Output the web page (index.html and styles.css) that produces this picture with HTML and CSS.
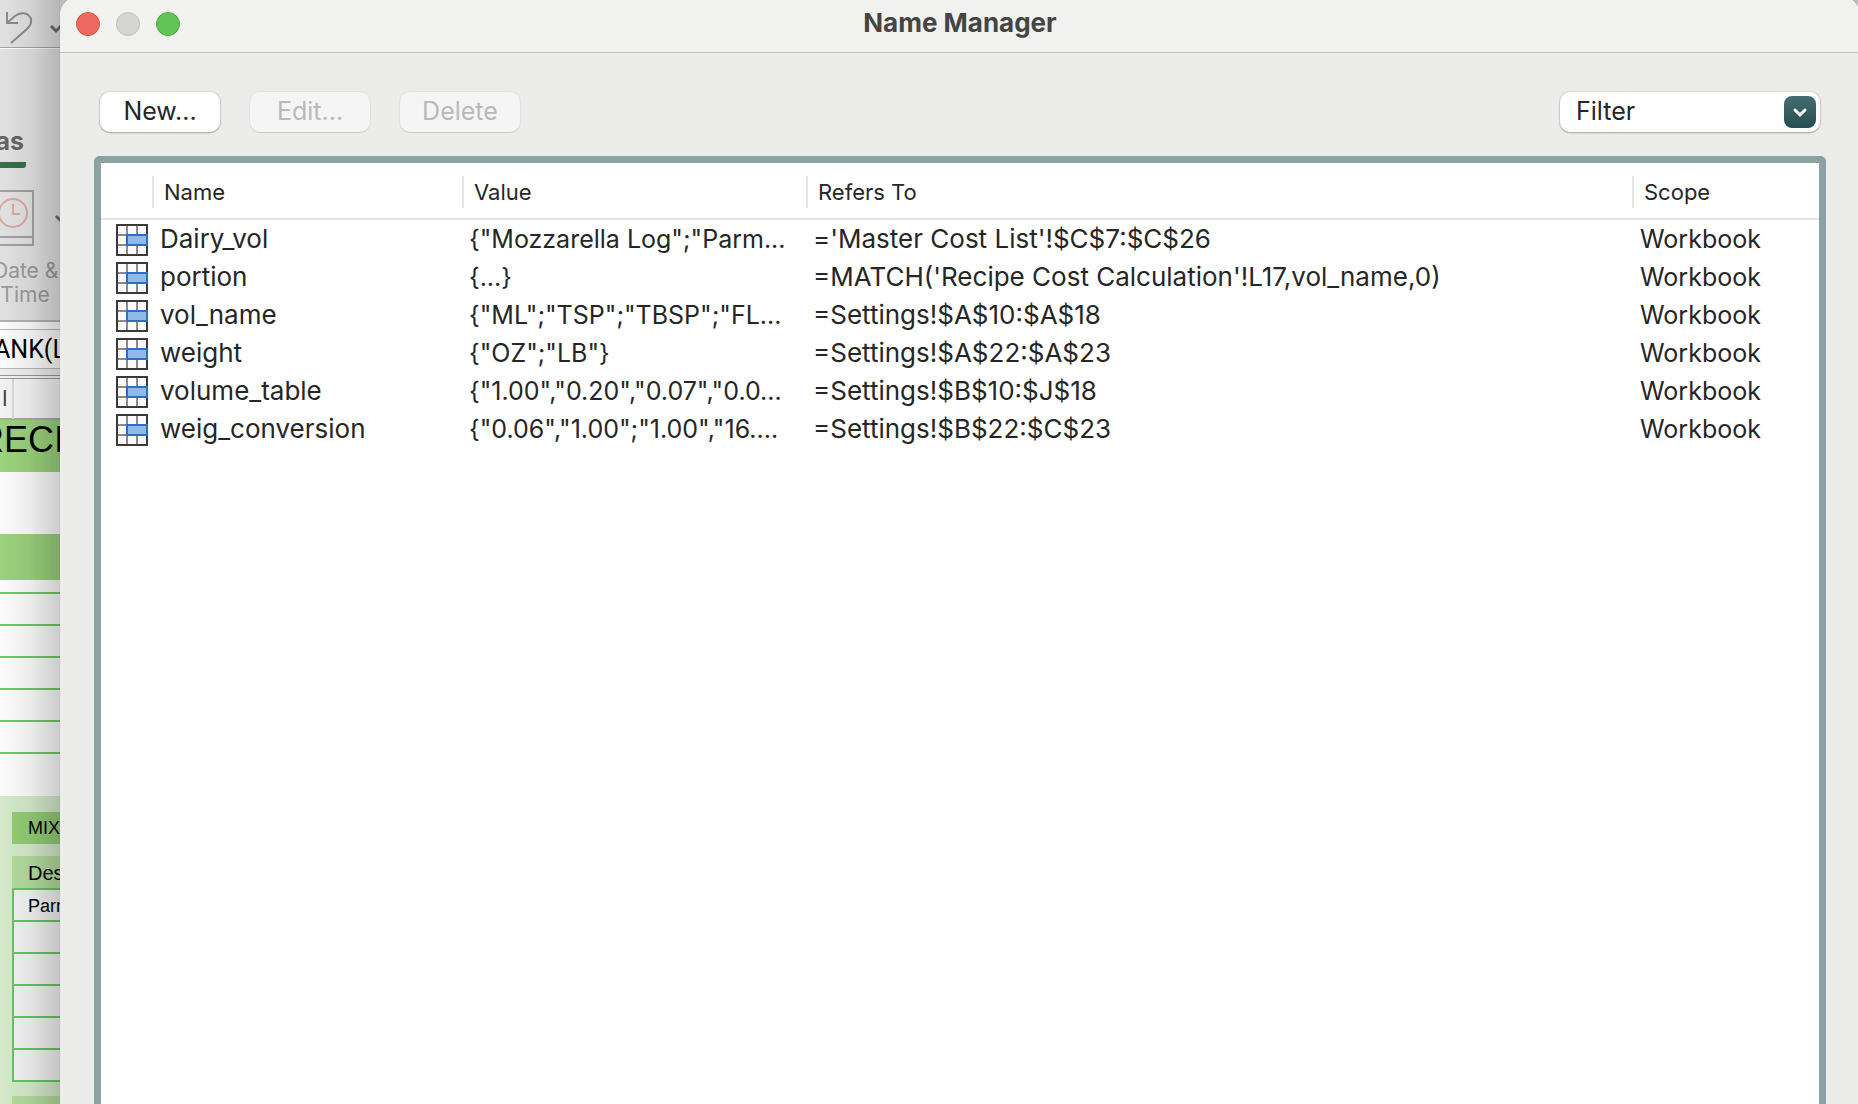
FILE: index.html
```html
<!DOCTYPE html>
<html lang="en">
<head>
<meta charset="utf-8">
<meta name="viewport" content="width=device-width, initial-scale=1">
<title>Name Manager</title>
<link rel="stylesheet" href="styles.css">
</head>
<body>
<svg class="defs" aria-hidden="true">
  <symbol id="range" viewBox="0 0 32 32">
    <path d="M1 1h30v30H1z" fill="#fafafa"/>
    <path d="M11 1v30M21 1v30M1 11h30M1 21h30" stroke="#8d8987" stroke-width="2"/>
    <path d="M1 1h30v30H1z" fill="none" stroke="#3b3a39" stroke-width="2"/>
    <path d="M11 11h20v10H11z" fill="#90bbe8" stroke="#2f6dc0" stroke-width="2"/>
  </symbol>
</svg>

<aside class="sheet">
  <div class="sheet-title">
    <svg class="undo" viewBox="0 0 60 47" fill="none">
      <path d="M7 12v11h11M7 23l8-7c6-5 14-3 16 3 1 4-1 7-4 10L11 43" stroke="#8c8c8c" stroke-width="2"/>
      <path d="M51 26l5 5 5-5" stroke="#6d6d6d" stroke-width="3"/>
    </svg>
  </div>
  <div class="ribbon">
    <div class="tab">as</div>
    <svg class="date-icon" viewBox="0 0 60 58" fill="none">
      <path d="M0 1h33v54H0M0 47h33" stroke="#a3a3a3" stroke-width="2"/>
      <circle cx="13" cy="23" r="14" stroke="#dda9a5" stroke-width="2"/>
      <path d="M13 14v10h7" stroke="#dda9a5" stroke-width="2"/>
      <path d="M56 26l5 5" stroke="#6d6d6d" stroke-width="3"/>
    </svg>
    <div class="date-label">Date &amp;<br>Time</div>
  </div>
  <div class="formula">ANK(L</div>
  <div class="columns"><span>I</span></div>
  <div class="banner">RECI</div>
  <div class="blank"></div>
  <div class="band"></div>
  <div class="lines"><i></i><i></i><i></i><i></i><i></i><i></i></div>
  <div class="mix">
    <div class="mix-title">MIX</div>
    <div class="mix-head">Des</div>
    <div class="mix-rows"><i>Parm</i><i></i><i></i><i></i><i></i><i></i></div>
    <div class="mix-next"></div>
  </div>
</aside>

<main class="dialog">
  <header class="titlebar">
    <div class="lights">
      <button class="light close" aria-label="Close"></button>
      <button class="light minimize" aria-label="Minimize" disabled></button>
      <button class="light expand" aria-label="Zoom"></button>
    </div>
    <h1>Name Manager</h1>
  </header>
  <div class="toolbar">
    <button class="push">New...</button>
    <button class="push" disabled>Edit...</button>
    <button class="push" disabled>Delete</button>
    <div class="filter">
      <select aria-label="Filter"><option>Filter</option></select>
      <svg class="filter-arrow" viewBox="0 0 32 32" fill="none" aria-hidden="true">
        <path d="M11 14l5 5 5-5" stroke="#fff" stroke-width="3" stroke-linecap="round" stroke-linejoin="round"/>
      </svg>
    </div>
  </div>
  <section class="panel">
    <table>
      <colgroup><col class="c-icon"><col class="c-name"><col class="c-value"><col><col class="c-scope"></colgroup>
      <thead>
        <tr><td></td><th><span>Name</span></th><th><span>Value</span></th><th><span>Refers To</span></th><th><span>Scope</span></th></tr>
      </thead>
      <tbody>
        <tr><td><svg class="range"><use href="#range"/></svg></td><td class="name">Dairy_vol</td><td>{"Mozzarella Log";"Parm...</td><td class="refers">='Master Cost List'!$C$7:$C$26</td><td class="scope">Workbook</td></tr>
        <tr><td><svg class="range"><use href="#range"/></svg></td><td class="name">portion</td><td>{...}</td><td class="refers">=MATCH('Recipe Cost Calculation'!L17,vol_name,0)</td><td class="scope">Workbook</td></tr>
        <tr><td><svg class="range"><use href="#range"/></svg></td><td class="name">vol_name</td><td>{"ML";"TSP";"TBSP";"FL...</td><td class="refers">=Settings!$A$10:$A$18</td><td class="scope">Workbook</td></tr>
        <tr><td><svg class="range"><use href="#range"/></svg></td><td class="name">weight</td><td>{"OZ";"LB"}</td><td class="refers">=Settings!$A$22:$A$23</td><td class="scope">Workbook</td></tr>
        <tr><td><svg class="range"><use href="#range"/></svg></td><td class="name">volume_table</td><td>{"1.00","0.20","0.07","0.0...</td><td class="refers">=Settings!$B$10:$J$18</td><td class="scope">Workbook</td></tr>
        <tr><td><svg class="range"><use href="#range"/></svg></td><td class="name">weig_conversion</td><td>{"0.06","1.00";"1.00","16....</td><td class="refers">=Settings!$B$22:$C$23</td><td class="scope">Workbook</td></tr>
      </tbody>
    </table>
  </section>
</main>
</body>
</html>
```
FILE: styles.css
```css
* { box-sizing: border-box; }

body {
  margin: 0;
  height: 100vh;
  display: flex;
  overflow: hidden;
  background: #bdbdbd;
  color: #262626;
  font-family: Inter, "Liberation Sans", sans-serif;
  font-size: 25px;
}

button, select { font: inherit; color: inherit; }
.defs { position: absolute; width: 0; height: 0; }

/* Workbook behind the dialog */
.sheet {
  position: relative;
  flex: 0 0 60px;
  display: flex;
  flex-direction: column;
  overflow: hidden;
  background: #fff;
  white-space: nowrap;
  color: #000;
  font-family: "Liberation Sans", Arial, sans-serif;
}
.sheet > * { flex-shrink: 0; }
.sheet i { display: block; font-style: normal; }
.sheet::after {
  content: "";
  position: absolute;
  inset: 0;
  border-right: 1px solid rgba(0, 0, 0, .22);
  background: linear-gradient(90deg, rgba(0, 0, 0, .01), rgba(0, 0, 0, .07) 50%, rgba(0, 0, 0, .2));
}
.sheet-title { height: 48px; background: #e4e4e4; border-bottom: 1px solid #a5a5a5; }
.undo { display: block; width: 60px; height: 47px; }
.ribbon {
  height: 274px;
  border-top: 1px solid #fff;
  border-bottom: 2px solid #b4b4b4;
  background: #e4e4e4;
  font-family: Inter, sans-serif;
}
.tab {
  width: 26px;
  height: 119px;
  padding-top: 76px;
  padding-right: 2px;
  display: flex;
  justify-content: flex-end;
  border-bottom: 6px solid #33734a;
  border-bottom-right-radius: 3px;
  color: #666;
  font-size: 25px;
  line-height: 32px;
  font-weight: 700;
}
.date-icon { display: block; width: 60px; height: 58px; margin-top: 22px; }
.date-label {
  width: 64px;
  margin: 11px 0 0 -7px;
  text-align: center;
  color: #9b9b9b;
  font-size: 21px;
  line-height: 24px;
}
.formula {
  height: 46px;
  margin-top: 7px;
  padding-top: 2px;
  border-top: 1px solid #bbb;
  background: linear-gradient(#fff 38px, #bbb 38px, #bbb 39px, #f1f1f1 39px);
  font-family: Roboto, sans-serif;
  font-size: 25px;
  line-height: 36px;
  text-indent: -6px;
}
.columns {
  height: 45px;
  border-top: 4px double #999;
  border-bottom: 2px solid #aaa;
  background: #f7f7f7;
  font-family: Inter, sans-serif;
  font-size: 21px;
  line-height: 40px;
}
.columns span {
  display: block;
  width: 14px;
  padding-left: 2px;
  border-right: 2px solid #ddd;
  color: #444;
}
.banner {
  height: 52px;
  background: #9dd47d;
  font-size: 36px;
  line-height: 40px;
  text-indent: -22px;
}
.blank { height: 62px; }
.band { height: 46px; background: #9dd47d; }
.lines { height: 216px; padding-top: 12px; }
.lines i { height: 32px; border-top: 2px solid #6fcd66; }
.mix {
  flex: 1 0 0;
  padding: 16px 0 0 12px;
  background: #d8edcd;
  font-size: 18px;
  line-height: 32px;
}
.mix-title { height: 32px; padding-left: 16px; background: #95cf77; }
.mix-head { height: 32px; margin-top: 12px; padding-left: 16px; background: #b7dfa1; font-size: 20px; line-height: 34px; }
.mix-rows { border: solid #68c862; border-width: 0 0 2px 2px; background: #f6f6f6; }
.mix-rows i { height: 32px; padding-left: 14px; border-top: 2px solid #68c862; }
.mix-next { height: 32px; margin-top: 14px; background: #b7dfa1; }

/* Dialog */
.dialog {
  flex: 1;
  display: flex;
  flex-direction: column;
  margin: -4px -2px 0 0;
  border-radius: 20px 20px 0 0;
  background: #ececea;
}
.titlebar {
  display: grid;
  grid-template-columns: 1fr auto 1fr;
  align-items: center;
  height: 57px;
  padding: 0 16px;
  border-bottom: 1px solid #c4c4c2;
  border-radius: 20px 20px 0 0;
  background: #f1f1ef;
}
.lights { display: flex; gap: 16px; }
.light { width: 24px; height: 24px; padding: 0; border: 1px solid #d35449; border-radius: 50%; background: #ec6a5f; }
.minimize { border-color: #bdbdbb; background: #d5d5d3; }
.expand { border-color: #50a941; background: #61c454; }
h1 { margin: 0; padding-bottom: 3px; font-size: 26px; line-height: 30px; font-weight: 700; color: #444; }
.toolbar { display: flex; gap: 30px; padding: 39px 40px 24px; }
.push {
  width: 120px;
  height: 40px;
  padding: 0 0 3px;
  border: 0;
  border-radius: 10px;
  background: #fff;
  box-shadow: 0 0 1px 1px rgba(0, 0, 0, .08), 0 1px 2px rgba(0, 0, 0, .25);
}
.push:disabled { color: #b9b9b9; background: #f5f5f5; box-shadow: 0 0 1px 1px rgba(0, 0, 0, .04), 0 1px 1px rgba(0, 0, 0, .1); }
.filter { position: relative; width: 260px; margin-left: auto; }
.filter select {
  appearance: none;
  display: block;
  width: 100%;
  height: 40px;
  padding: 0 40px 3px 16px;
  border: 0;
  border-radius: 10px;
  background: #fff;
  box-shadow: 0 0 1px 1px rgba(0, 0, 0, .08), 0 1px 2px rgba(0, 0, 0, .25);
}
.filter-arrow {
  position: absolute;
  top: 4px;
  right: 4px;
  width: 32px;
  height: 32px;
  border-radius: 8px;
  background: linear-gradient(#456d71, #264e53);
  pointer-events: none;
}
.panel {
  flex: 1;
  margin: 0 34px;
  border: 7px solid #8ba1a2;
  border-bottom: 0;
  border-radius: 6px 6px 0 0;
  background: #fff;
}
table { width: 100%; table-layout: fixed; border-collapse: separate; border-spacing: 0; }
.c-icon { width: 51px; }
.c-name { width: 310px; }
.c-value { width: 344px; }
.c-scope { width: 187px; }
td, th { padding: 0; text-align: left; vertical-align: top; white-space: nowrap; }
thead td, th { height: 57px; padding-top: 13px; border-bottom: 2px solid #e3e3e3; }
th { font-size: 22px; font-weight: 400; }
th span { display: block; padding-left: 10px; border-left: 2px solid #e3e3e3; line-height: 32px; }
tbody td { height: 38px; padding-left: 7px; line-height: 38px; }
tbody td:first-child { padding: 4px 0 0 15px; }
.name, .refers { font-size: 26px; }
tbody .name, tbody .scope { padding-left: 8px; }
.range { display: block; width: 32px; height: 32px; }
```
